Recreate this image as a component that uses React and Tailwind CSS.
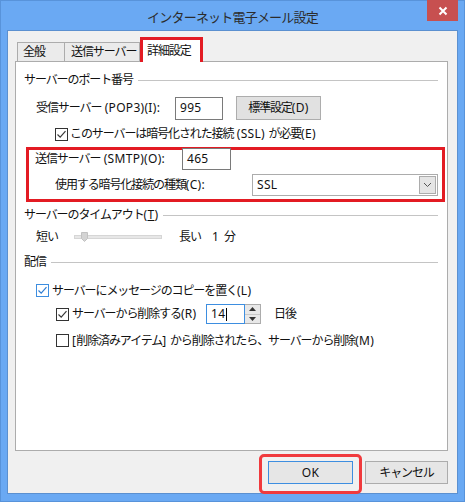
import React from 'react';

// Windows 8 style "Internet E-mail Settings" dialog, advanced tab

// latin runs keep open spacing, Japanese runs are tightened
const L = ({ children }) => <span className="tracking-[0.3px]">{children}</span>;

const Check = ({ checked, focus }) => (
  <span
    className={`w-[13px] h-[13px] border bg-white flex items-center justify-center shrink-0 ${
      focus ? 'border-[#3d8ee0]' : 'border-[#333333]'
    }`}
  >
    {checked && (
      <svg width="11" height="11" viewBox="0 0 11 11">
        <path d="M1.5 5.5 L4.2 8.2 L9.5 2.2" fill="none" stroke={focus ? '#2f7dd3' : '#3a3a3a'} strokeWidth="1.2" />
      </svg>
    )}
  </span>
);

const Group = ({ children, className = '' }) => (
  <div className={`flex items-center h-[16px] ${className}`}>
    <span className="whitespace-nowrap">{children}</span>
    <span className="flex-1 h-px bg-[#c4c4c4] ml-[5px] mr-[9px]" />
  </div>
);

export default function App() {
  return (
    <div className="w-[465px] h-[502px] bg-[#6aa9f3] border border-[#5893da] px-[6px] pb-[7px] flex flex-col font-['Noto_Sans','Noto_Sans_CJK_JP',sans-serif] text-[12px] leading-[16px] tracking-[-1.1px] text-[#111]">
      {/* title bar */}
      <div className="h-[29px] relative flex items-center justify-center shrink-0">
        <span className="text-[13px] tracking-[-0.8px] text-[#2c2c2c] pt-[2px]">インターネット電子メール設定</span>
        <div className="absolute right-[0px] -top-px w-[31px] h-[21px] bg-[#c75050] flex items-center justify-center">
          <svg width="10" height="10" viewBox="0 0 10 10">
            <path d="M1.5 1.5 L8.5 8.5 M8.5 1.5 L1.5 8.5" stroke="#fff" strokeWidth="2" />
          </svg>
        </div>
      </div>

      {/* client area */}
      <div className="flex-1 border border-[#5b90d0] bg-[#f0f0f0] pl-[7px] pr-[9px] flex flex-col">
        {/* tabs */}
        <div className="h-[30px] flex items-end pl-[2px] shrink-0 whitespace-nowrap">
          <div className="w-[48px] h-[19px] border border-b-0 border-[#acacac] bg-[#ebebeb] pl-[5px] flex items-center">全般</div>
          <div className="w-[75px] h-[19px] border border-b-0 border-l-0 border-[#acacac] bg-[#ebebeb] pl-[6px] flex items-center">送信サーバー</div>
          <div className="w-[63px] h-[25px] border-[3px] border-b-0 border-[#e31b23] bg-white pl-[4px] flex items-center relative z-10 -mb-px">詳細設定</div>
        </div>

        {/* panel */}
        <div className="h-[390px] border border-[#acacac] bg-white pl-[8px] flex flex-col shrink-0">
          <Group className="mt-[10px]">サーバーのポート番号</Group>

          <div className="flex items-center h-[24px] mt-[8px] pl-[12px]">
            <span className="w-[139px] whitespace-nowrap">受信サーバー<L> (POP3)(I):</L></span>
            <div className="w-[48px] h-[23px] border border-[#7a7a7a] bg-white pl-[4px] flex items-center"><L>995</L></div>
            <div className="ml-[13px] w-[85px] h-[24px] border border-[#adadad] bg-[#e1e1e1] flex items-center justify-center">標準設定<L>(D)</L></div>
          </div>

          <div className="flex items-center h-[14px] mt-[7px] pl-[31px] gap-[2px]">
            <Check checked />
            <span className="whitespace-nowrap">このサーバーは暗号化された接続<L> (SSL) </L>が必要<L>(E)</L></span>
          </div>

          {/* highlighted SMTP block */}
          <div className="mt-[6px] ml-[2px] mr-[2px] h-[55px] border-[3px] border-[#e31b23] flex flex-col">
            <div className="flex items-center h-[22px] -mt-[2px] pl-[6px]">
              <span className="w-[147px] whitespace-nowrap">送信サーバー<L> (SMTP)(O):</L></span>
              <div className="relative z-10 w-[49px] h-[22px] border border-[#7a7a7a] bg-white pl-[4px] flex items-center"><L>465</L></div>
            </div>
            <div className="flex items-center h-[22px] mt-[4px] pl-[26px]">
              <span className="w-[197px] whitespace-nowrap">使用する暗号化接続の種類<L>(C):</L></span>
              <div className="w-[186px] h-[22px] border border-[#acacac] bg-white flex items-center pl-[4px] pr-px">
                <span className="flex-1"><L>SSL</L></span>
                <div className="w-[17px] h-[18px] border border-[#acacac] bg-[#e5e5e5] flex items-center justify-center">
                  <svg width="9" height="6" viewBox="0 0 9 6">
                    <path d="M1 1 L4.5 4.5 L8 1" fill="none" stroke="#555" strokeWidth="1" />
                  </svg>
                </div>
              </div>
            </div>
          </div>

          <Group className="mt-[5px]">
            サーバーのタイムアウト<L>(<span className="underline">T</span>)</L>
          </Group>

          <div className="flex items-center h-[16px] mt-[6px] pl-[12px]">
            <span className="w-[38px]">短い</span>
            <div className="w-[88px] h-[10px] relative flex items-center">
              <div className="w-full h-[4px] bg-[#e7e7e7] border border-[#d6d6d6]" />
              <svg className="absolute left-[7px] top-0" width="7" height="10" viewBox="0 0 7 10">
                <path d="M0.5 0.5 H6.5 V6.5 L3.5 9.5 L0.5 6.5 Z" fill="#d4d4d4" stroke="#c2c2c2" strokeWidth="1" />
              </svg>
            </div>
            <span className="ml-[17px] w-[33px]">長い</span>
            <span className="w-[12px]"><L>1</L></span>
            <span>分</span>
          </div>

          <Group className="mt-[9px]">配信</Group>

          <div className="flex items-center h-[13px] mt-[14px] pl-[12px] gap-[3px]">
            <Check checked focus />
            <span className="whitespace-nowrap">サーバーにメッセージのコピーを置く<L>(L)</L></span>
          </div>

          <div className="flex items-center h-[20px] mt-[7px] pl-[32px]">
            <div className="w-[150px] flex items-center gap-[3px]">
              <Check checked />
              <span className="whitespace-nowrap">サーバーから削除する<L>(R)</L></span>
            </div>
            <div className="flex h-[20px]">
              <div className="w-[39px] h-[20px] border border-[#3d8ee0] bg-white pl-[4px] flex items-center">
                <L>14</L><span className="w-px h-[13px] bg-black ml-[1px]" />
              </div>
              <div className="w-[16px] h-[20px] border border-l-0 border-[#acacac] bg-[#e8e8e8] flex flex-col">
                <div className="flex-1 flex items-center justify-center border-b border-[#c8c8c8]">
                  <svg width="7" height="4" viewBox="0 0 7 4"><path d="M0 4 L3.5 0 L7 4 Z" fill="#333" /></svg>
                </div>
                <div className="flex-1 flex items-center justify-center">
                  <svg width="7" height="4" viewBox="0 0 7 4"><path d="M0 0 L3.5 4 L7 0 Z" fill="#333" /></svg>
                </div>
              </div>
            </div>
            <span className="ml-[13px]">日後</span>
          </div>

          <div className="flex items-center h-[13px] mt-[10px] pl-[32px] gap-[3px]">
            <Check />
            <span className="whitespace-nowrap"><L>[</L>削除済みアイテム<L>] </L>から削除されたら、サーバーから削除<L>(M)</L></span>
          </div>
        </div>

        {/* buttons */}
        <div className="flex justify-end items-start mt-[10px] pr-0">
          <div className="relative">
            <div className="absolute -left-[9px] -right-[9px] -top-[7px] -bottom-[10px] border-[3px] border-[#f03a3d] rounded-[5px]" />
            <div className="w-[85px] h-[23px] border border-[#3d8ee0] bg-[#e6e6e6] flex items-center justify-center"><L>OK</L></div>
          </div>
          <div className="ml-[12px] w-[83px] h-[23px] border border-[#acacac] bg-[#e6e6e6] flex items-center justify-center">キャンセル</div>
        </div>
      </div>
    </div>
  );
}
